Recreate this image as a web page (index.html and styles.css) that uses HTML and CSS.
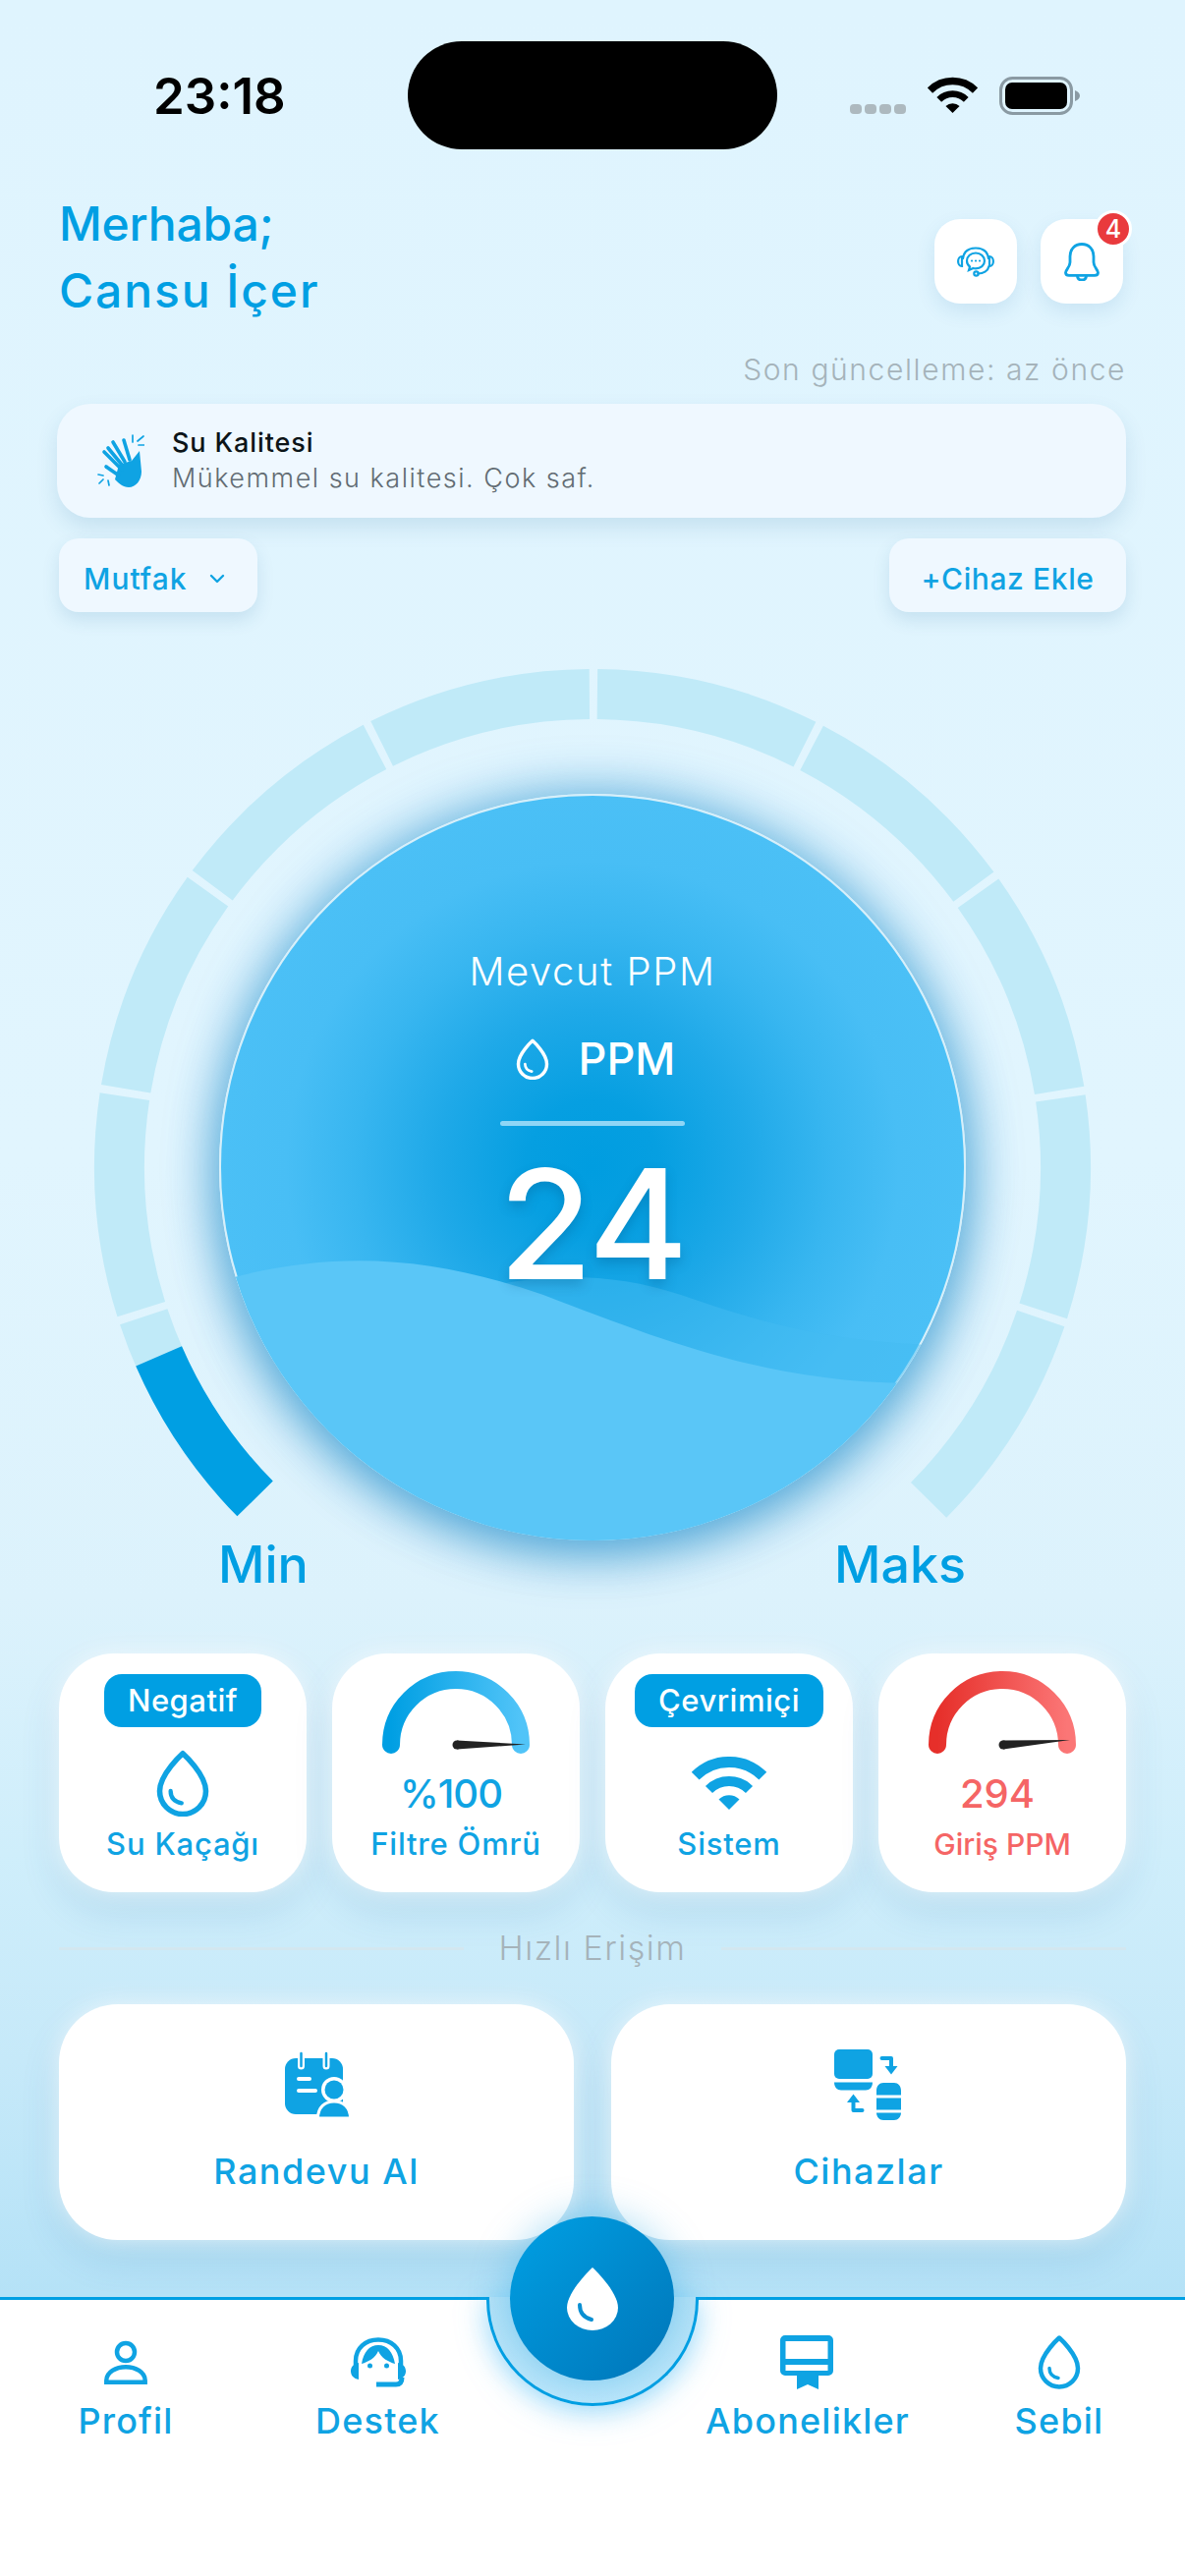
FILE: index.html
```html
<!DOCTYPE html>
<html lang="tr">
<head>
  <meta charset="UTF-8" />
  <title>Su Kalitesi</title>
  <link rel="stylesheet" href="styles.css">
</head>
<body>
  <svg class="defs" width="0" height="0">
    <defs>
      <symbol id="drop" viewBox="0 0 44 55">
        <path d="M22 3C22 3 3 20 3 34a19 19 0 0 0 38 0C41 20 22 3 22 3Z" fill="none" stroke="currentColor" stroke-width="4.5" stroke-linejoin="round"/>
        <path d="M12 34c0 6 4 9 9 10" fill="none" stroke="currentColor" stroke-width="3.5" stroke-linecap="round"/>
      </symbol>
      <linearGradient id="blueArc" x1="0" y1="0" x2="1" y2="0">
        <stop offset="0" stop-color="#009fe3"/>
        <stop offset="1" stop-color="#51c4f8"/>
      </linearGradient>
      <linearGradient id="redArc" x1="0" y1="0" x2="1" y2="0">
        <stop offset="0" stop-color="#e62f2a"/>
        <stop offset="1" stop-color="#fb7676"/>
      </linearGradient>
    </defs>
  </svg>

  <div class="screen">
    <div class="status">
      <span class="time">23:18</span>
      <span class="island"></span>
      <span class="signal"><i></i><i></i><i></i><i></i></span>
      <svg class="status-wifi" viewBox="0 0 76 54">
        <path d="M38 54 27.500 43.500A14.800 14.800 0 0 1 48.500 43.500Z" fill="currentColor"/>
        <path d="M17.500 33.500A29 29 0 0 1 58.500 33.500" fill="none" stroke="currentColor" stroke-width="10"/>
        <path d="M3.700 19.700A48.500 48.500 0 0 1 72.300 19.700" fill="none" stroke="currentColor" stroke-width="11"/>
      </svg>
      <svg class="battery" width="82" height="39" viewBox="0 0 82 39">
        <rect x="1.500" y="1.500" width="72" height="36" rx="12" fill="none" stroke="#8a9aa3" stroke-width="3"/>
        <rect x="6" y="6" width="63" height="27" rx="7" fill="#000"/>
        <path d="M77 14c3 1 5 3 5 5.500S80 24 77 25Z" fill="#8a9aa3"/>
      </svg>
    </div>

    <header class="header">
      <h1 class="greeting"><span class="greet-a">Merhaba;</span><span class="greet-b">Cansu İçer</span></h1>
      <div class="header-actions">
        <button class="icon-btn">
          <svg width="38" height="31" viewBox="0 0 38 31" fill="none" stroke="#0fa3e3" stroke-width="2.200" stroke-linecap="round">
            <path d="M6 12C7 5 12 1.500 19 1.500S31 5 32 12"/>
            <path d="M5 10C2.500 10 1.100 12.500 1.100 15S2.500 20 5 20Z"/>
            <path d="M33 10C35.500 10 36.900 12.500 36.900 15S35.500 20 33 20Z"/>
            <path d="M19 6.500c-5 0-9 3.300-9 8 0 2.500 1 4.500 3 6l-1 3.500 4.500-2c.8.200 1.600.300 2.500.300 5 0 9-3.300 9-7.800s-4-8-9-8Z"/>
            <path d="M32.500 20c-1 5-6 7.500-11 7.500"/>
            <circle cx="19.500" cy="27.500" r="2.200"/>
            <path d="M15 14.500h.1M19 14.500h.1M23 14.500h.1"/>
          </svg>
        </button>
        <button class="icon-btn">
          <svg width="36" height="39" viewBox="0 0 36 39" fill="none" stroke="#0fa3e3" stroke-width="2.800" stroke-linejoin="round">
            <path d="M18 1.500C10.500 1.500 6 7 6 14v6c0 5-4.500 7.500-4.500 10.500 0 2 1.200 2.800 3.500 2.800h26c2.300 0 3.500-.800 3.500-2.800C34.500 27.500 30 25 30 20v-6C30 7 25.500 1.500 18 1.500Z"/>
            <path d="M13.500 33.500c0 3 2 4.500 4.500 4.500s4.500-1.500 4.500-4.500"/>
          </svg>
          <span class="badge">4</span>
        </button>
      </div>
    </header>

    <p class="updated">Son güncelleme: az önce</p>

    <div class="quality">
      <svg class="clap" width="48" height="54" viewBox="0 0 48 54" fill="#0fa3e3" stroke="#0fa3e3" stroke-linecap="round">
        <path d="M22 31 35 27 43 17 45 38C45 47 39 54 32 54 26 54 22 50 18 46Z" stroke="none"/>
        <g fill="none" stroke-width="3.600">
          <path d="M25 36 7 18"/>
          <path d="M25 31 11 14"/>
          <path d="M28 28 16 8"/>
          <path d="M33 26 27 6"/>
          <path d="M22 42 9 33"/>
        </g>
        <g fill="none" stroke-width="1.700">
          <path d="M36 1v7M47 2l-6 5M48 11h-6M1 41l5 1M2 50l4-4M12 52l-1-5"/>
        </g>
      </svg>
      <div class="quality-text">
        <strong>Su Kalitesi</strong>
        <span>Mükemmel su kalitesi. Çok saf.</span>
      </div>
    </div>

    <div class="toolbar">
      <button class="pill-btn mutfak">Mutfak
        <svg width="16" height="10" viewBox="0 0 16 10" fill="none" stroke="#0fa3e3" stroke-width="2.400" stroke-linecap="round" stroke-linejoin="round"><path d="M2 2l6 6 6-6"/></svg>
      </button>
      <button class="pill-btn add">+Cihaz Ekle</button>
    </div>

    <section class="gauge">
      <svg class="ring" width="1014" height="887" viewBox="0 0 1014 887">
        <g transform="rotate(135.500 507 507)" fill="none" stroke-width="51">
          <circle cx="507" cy="507" r="481.500" stroke="#c0eaf8" stroke-dasharray="219 8 219 8 219 8 219 8 219 8 219 8 219 8 219 8 219 8 219 764"/>
          <circle cx="507" cy="507" r="481.500" stroke="#009fe3" stroke-dasharray="176 2900"/>
        </g>
      </svg>
      <div class="dial">
        <svg class="waves" width="760" height="760" viewBox="0 0 760 760">
          <path d="M204 522C290 490 380 480 470 510 570 545 640 560 760 562V760H0V600C60 570 130 545 204 522Z" fill="#43bbf2" fill-opacity=".5"/>
          <path d="M0 496C120 462 220 472 330 510 460 560 560 598 700 600L760 600V760H0Z" fill="#5ac6f7"/>
        </svg>
        <div class="dial-title">Mevcut PPM</div>
        <div class="dial-unit">
          <svg class="dial-drop" width="34" height="42"><use href="#drop"/></svg>
          <span>PPM</span>
        </div>
        <div class="dial-line"></div>
        <div class="dial-value">24</div>
      </div>
    </section>

    <div class="limits"><span>Min</span><span>Maks</span></div>

    <section class="stats">
      <div class="stat">
        <span class="tag">Negatif</span>
        <div class="stat-icon"><svg width="56" height="68"><use href="#drop"/></svg></div>
        <div class="stat-label">Su Kaçağı</div>
      </div>
      <div class="stat stat-gauge">
        <svg width="150" height="90" viewBox="0 0 150 90">
          <path d="M9 75A66 66 0 0 1 141 75" fill="none" stroke="url(#blueArc)" stroke-width="18" stroke-linecap="round"/>
          <circle cx="76" cy="75" r="4.500" fill="#222"/>
          <path d="M76 70.500 146 74.500 76 79.500Z" fill="#222"/>
        </svg>
        <div class="stat-value percent">%100</div>
        <div class="stat-label">Filtre Ömrü</div>
      </div>
      <div class="stat">
        <span class="tag">Çevrimiçi</span>
        <div class="stat-icon">
          <svg width="76" height="54" viewBox="0 0 76 54">
            <path d="M38 54 27.500 43.500A14.800 14.800 0 0 1 48.500 43.500Z" fill="currentColor"/>
            <path d="M17.500 33.500A29 29 0 0 1 58.500 33.500" fill="none" stroke="currentColor" stroke-width="10"/>
            <path d="M3.700 19.700A48.500 48.500 0 0 1 72.300 19.700" fill="none" stroke="currentColor" stroke-width="11"/>
          </svg>
        </div>
        <div class="stat-label">Sistem</div>
      </div>
      <div class="stat stat-gauge stat-red">
        <svg width="150" height="90" viewBox="0 0 150 90">
          <path d="M9 75A66 66 0 0 1 141 75" fill="none" stroke="url(#redArc)" stroke-width="18" stroke-linecap="round"/>
          <circle cx="76" cy="75" r="4.500" fill="#222"/>
          <path d="M75.500 70.500 144 70 76 79.500Z" fill="#222"/>
        </svg>
        <div class="stat-value">294</div>
        <div class="stat-label">Giriş PPM</div>
      </div>
    </section>

    <div class="quick-title"><span>Hızlı Erişim</span></div>

    <section class="quick">
      <div class="quick-card">
        <svg width="72" height="72" viewBox="0 0 72 72">
          <rect x="4" y="9" width="59" height="57" rx="11" fill="#0fa3e3"/>
          <path d="M20.500 4v13M46 4v13" stroke="#fff" stroke-width="7" stroke-linecap="round"/>
          <path d="M20.500 4v13M46 4v13" stroke="#0fa3e3" stroke-width="2.500" stroke-linecap="round"/>
          <path d="M18 30h11M18 42h17" stroke="#fff" stroke-width="4" stroke-linecap="round"/>
          <circle cx="54" cy="41" r="13" fill="#fff"/>
          <circle cx="54" cy="41" r="9.500" fill="#0fa3e3"/>
          <path d="M37.500 70c0-11 7-17 16.500-17s16.500 6 16.500 17Z" fill="#0fa3e3" stroke="#fff" stroke-width="3"/>
        </svg>
        <div class="quick-label">Randevu Al</div>
      </div>
      <div class="quick-card">
        <svg width="72" height="72" viewBox="0 0 72 72" fill="#0fa3e3">
          <rect x="1" y="0" width="39" height="30" rx="5"/>
          <path d="M1 33.500h39c0 5-3 8-7 8H8c-4 0-7-3-7-8Z"/>
          <path d="M44 42c0-5 3-8 7-8h11c4 0 7 3 7 8v4.500H44ZM44 49.500h25v12H44ZM44 64.500h25c0 4-3 7.500-7 7.500H51c-4 0-7-3.500-7-7.500Z"/>
          <path d="M49.500 9h9.500v9" fill="none" stroke="#0fa3e3" stroke-width="4" stroke-linecap="round" stroke-linejoin="round"/>
          <path d="M52.500 17h13L59 25.500Z"/>
          <path d="M29.500 62h-9v-9" fill="none" stroke="#0fa3e3" stroke-width="4" stroke-linecap="round" stroke-linejoin="round"/>
          <path d="M14 54h13l-6.500-8.500Z"/>
        </svg>
        <div class="quick-label">Cihazlar</div>
      </div>
    </section>

    <nav class="nav">
      <div class="notch"></div>
      <div class="fab">
        <svg width="52" height="64" viewBox="0 0 52 64">
          <path d="M26 0C26 0 0 24 0 41a26 23 0 0 0 52 0C52 24 26 0 26 0Z" fill="#fff"/>
          <path d="M13 38c0 8 4 13 12 15" fill="none" stroke="#0a8fd2" stroke-width="4" stroke-linecap="round"/>
        </svg>
      </div>
      <a class="nav-item">
        <svg width="44" height="56" viewBox="0 0 44 56" fill="none" stroke="currentColor" stroke-width="4.500">
          <circle cx="22" cy="18" r="9"/>
          <path d="M2.300 48.700V47C2.300 38.500 12 33.200 22 33.200S41.700 38.500 41.700 47V48.700Z"/>
        </svg>
        <span>Profil</span>
      </a>
      <a class="nav-item">
        <svg width="56" height="56" viewBox="0 0 56 56" fill="none" stroke="currentColor" stroke-width="4.500">
          <path d="M5 32V27C5 14 15 5.500 28 5.500S51 14 51 27V32"/>
          <path d="M11 30C13 18 19 11 28 11S43 18 45 30C38 28 31 24 28 17 25 24 18 28 11 30Z" fill="currentColor" stroke="none"/>
          <path d="M8 29C3 30 0 33 0 37.500S3 45 8 46ZM48 29C53 30 56 33 56 37.500S53 45 48 46Z" fill="currentColor" stroke="none"/>
          <circle cx="19.500" cy="32" r="2.500" fill="currentColor" stroke="none"/>
          <circle cx="36.500" cy="32" r="2.500" fill="currentColor" stroke="none"/>
          <path d="M52 44C52 49 50 51 46 51H26" stroke-width="5"/>
        </svg>
        <span>Destek</span>
      </a>
      <span class="nav-gap"></span>
      <a class="nav-item">
        <svg width="56" height="56" viewBox="0 0 56 56" fill="currentColor">
          <path d="M5 1h44a5 5 0 0 1 5 5v31a5 5 0 0 1-5 5H5a5 5 0 0 1-5-5V6a5 5 0 0 1 5-5Zm.5 6v18h43V7Zm0 24v6h43v-6Z" fill-rule="evenodd"/>
          <path d="M17 42h22v14l-11-5-11 5Z"/>
        </svg>
        <span>Abonelikler</span>
      </a>
      <a class="nav-item">
        <svg width="44" height="56"><use href="#drop"/></svg>
        <span>Sebil</span>
      </a>
    </nav>
  </div>
</body>
</html>
```

FILE: styles.css
```css
* {
  box-sizing: border-box;
}

body {
  margin: 0;
  font-family: Inter, "Noto Sans", sans-serif;
  color: #009fe3;
}

.defs {
  display: block;
  height: 0;
}

.screen {
  width: 1206px;
  height: 2622px;
  overflow: hidden;
  display: flex;
  flex-direction: column;
  background: linear-gradient(180deg, #dff4fe 0, #e1f5fe 45%, #dcf2fc 62%, #cfeefb 72%, #c6e9f9 80%, #b5e2f7 89%);
}

button {
  font-family: inherit;
  border: none;
  cursor: pointer;
}

/* status bar */
.status {
  height: 194px;
  padding: 42px 106px 0 156px;
  display: flex;
  align-items: flex-start;
  color: #000;
}

.time {
  width: 259px;
  height: 110px;
  font-size: 51px;
  font-weight: 600;
  line-height: 112px;
}

.island {
  width: 376px;
  height: 110px;
  border-radius: 55px;
  background: #000;
}

.signal {
  display: flex;
  gap: 3px;
  margin: 64px 0 0 74px;
}

.signal i {
  width: 12px;
  height: 10px;
  border-radius: 4px;
  background: #adb9bf;
}

.status-wifi {
  width: 51px;
  height: 38px;
  margin: 36px 0 0 22px;
}

.battery {
  margin: 36px 0 0 22px;
}

/* header */
.header {
  height: 136px;
  padding: 0 63px 0 60px;
  display: flex;
  justify-content: space-between;
}

.greeting {
  margin: 0;
  display: flex;
  flex-direction: column;
  font-size: 48px;
  font-weight: 500;
  line-height: 68px;
}

.greet-a {
  letter-spacing: -0.2px;
}

.greet-b {
  letter-spacing: 1.9px;
}

.header-actions {
  display: flex;
  gap: 24px;
  padding-top: 29px;
}

.icon-btn {
  position: relative;
  width: 84px;
  height: 86px;
  padding: 0;
  display: flex;
  align-items: center;
  justify-content: center;
  border-radius: 26px;
  background: #fff;
  box-shadow: 0 8px 20px rgba(0, 100, 160, 0.1);
}

.badge {
  position: absolute;
  top: -9px;
  right: -9px;
  width: 38px;
  height: 38px;
  border-radius: 50%;
  border: 3px solid #fff;
  background: #e93a3d;
  color: #fff;
  font-size: 25px;
  font-weight: 500;
  line-height: 32px;
  text-align: center;
}

.updated {
  margin: 26px 60px 15px;
  font-size: 30px;
  font-weight: 300;
  line-height: 40px;
  text-align: right;
  letter-spacing: 1.6px;
  color: #a5b3ba;
}

/* quality card */
.quality {
  height: 116px;
  margin: 0 60px 0 58px;
  padding-left: 41px;
  display: flex;
  align-items: center;
  gap: 28px;
  border-radius: 34px;
  background: #eff8ff;
  box-shadow: 0 10px 22px rgba(0, 90, 140, 0.12);
}

.quality-text {
  display: flex;
  flex-direction: column;
  gap: 4px;
}

.quality-text strong {
  font-size: 27px;
  font-weight: 500;
  line-height: 32px;
  letter-spacing: 0.9px;
  color: #0c1418;
}

.quality-text span {
  font-size: 27px;
  font-weight: 300;
  line-height: 32px;
  letter-spacing: 1.5px;
  color: #626c73;
}

.toolbar {
  margin: 21px 60px 0;
  display: flex;
  justify-content: space-between;
}

.pill-btn {
  height: 75px;
  padding: 6px 0 0;
  display: flex;
  align-items: center;
  border-radius: 20px;
  background: #eff8ff;
  color: #0fa3e3;
  font-size: 30px;
  font-weight: 500;
  letter-spacing: 0.6px;
  box-shadow: 0 8px 18px rgba(0, 90, 140, 0.12);
}

.mutfak {
  width: 202px;
  padding-left: 25px;
  gap: 22px;
  letter-spacing: 1px;
}

.add {
  width: 241px;
  justify-content: center;
}

/* main gauge */
.gauge {
  width: 1014px;
  height: 887px;
  margin: 58px 0 0 96px;
  display: grid;
  justify-items: center;
}

.ring,
.dial {
  grid-area: 1 / 1;
}

.ring {
  overflow: visible;
}

.dial {
  position: relative;
  width: 760px;
  height: 760px;
  margin-top: 127px;
  padding-top: 154px;
  display: flex;
  flex-direction: column;
  align-items: center;
  border: 2px solid #d6effa;
  border-radius: 50%;
  color: #fff;
  background: radial-gradient(circle 380px at 50% 50%, #009de0 0, #069fe1 18%, #1fa9e8 42%, #38b6f0 64%, #48bef5 82%, #4bc0f6 100%);
  box-shadow: 0 0 50px 6px rgba(0, 130, 200, 0.4), 0 16px 50px rgba(0, 120, 190, 0.45);
}

.waves {
  position: absolute;
  top: -2px;
  left: -2px;
  border-radius: 50%;
}

.dial-title,
.dial-unit,
.dial-line,
.dial-value {
  position: relative;
}

.dial-title {
  font-size: 40px;
  font-weight: 300;
  line-height: 50px;
  letter-spacing: 1.6px;
}

.dial-unit {
  margin: 34px 0 0 6px;
  display: flex;
  align-items: center;
  gap: 30px;
  font-size: 45px;
  font-weight: 500;
  line-height: 60px;
}

.dial-line {
  width: 188px;
  height: 5px;
  margin-top: 33px;
  border-radius: 3px;
  background: #8fd6f6;
}

.dial-value {
  margin-top: 25px;
  font-size: 155px;
  font-weight: 500;
  line-height: 150px;
  letter-spacing: -2px;
  text-shadow: 0 6px 12px rgba(0, 70, 120, 0.25);
}

.limits {
  margin-top: -5px;
  padding: 0 223px 0 222px;
  display: flex;
  justify-content: space-between;
  font-size: 52px;
  font-weight: 500;
  line-height: 60px;
}

/* stat cards */
.stats {
  margin: 60px 60px 0;
  display: grid;
  grid-template-columns: repeat(4, 1fr);
  gap: 26px;
}

.stat {
  height: 243px;
  padding: 21px 0 29px;
  display: flex;
  flex-direction: column;
  align-items: center;
  border-radius: 56px;
  background: #fff;
  color: #0fa3e3;
  box-shadow: 0 0 26px rgba(255, 255, 255, 0.75), 0 18px 40px rgba(0, 100, 160, 0.14);
}

.stat-gauge {
  padding-top: 18px;
}

.tag {
  height: 54px;
  padding: 0 24px;
  border-radius: 18px;
  background: #009fe3;
  color: #fff;
  font-size: 31px;
  font-weight: 500;
  line-height: 54px;
  letter-spacing: 0.5px;
}

.stat-icon {
  height: 68px;
  margin-top: 23px;
  display: flex;
  align-items: center;
}

.stat-value {
  margin: 10px 10px 0 0;
  font-size: 40px;
  font-weight: 500;
  line-height: 50px;
}

.percent {
  letter-spacing: -1px;
}

.stat-label {
  margin-top: auto;
  font-size: 31px;
  font-weight: 500;
  line-height: 40px;
  letter-spacing: 0.8px;
}

.stat-red {
  color: #f56565;
}

.stat-red .stat-label {
  font-size: 30px;
  letter-spacing: 0;
}

.quick-title {
  margin: 37px 60px;
  display: flex;
  align-items: center;
  gap: 36px;
  font-size: 34px;
  font-weight: 300;
  line-height: 40px;
  letter-spacing: 1.5px;
  color: #a5b3ba;
}

.quick-title::before,
.quick-title::after {
  content: "";
  flex: 1;
  height: 3px;
  background: #d3e7f0;
}

/* quick access */
.quick {
  margin: 0 60px;
  display: grid;
  grid-template-columns: repeat(2, 1fr);
  gap: 38px;
}

.quick-card {
  height: 240px;
  padding-top: 46px;
  display: flex;
  flex-direction: column;
  align-items: center;
  border-radius: 60px;
  background: #fff;
  color: #0fa3e3;
  box-shadow: 0 0 26px rgba(255, 255, 255, 0.75), 0 18px 40px rgba(0, 100, 160, 0.14);
}

.quick-label {
  margin-top: 27px;
  font-size: 36px;
  font-weight: 500;
  line-height: 50px;
  letter-spacing: 1.5px;
}

/* bottom navigation */
.nav {
  position: relative;
  flex: 1;
  margin-top: 58px;
  padding-top: 35px;
  display: grid;
  grid-template-columns: 256px 257px 181px 256px 256px;
  align-content: start;
  border-top: 3px solid #009fe3;
  background: #fff;
}

.notch {
  position: absolute;
  top: -3px;
  left: 495px;
  width: 216px;
  height: 111px;
  border: 3px solid #009fe3;
  border-top: none;
  border-radius: 0 0 108px 108px;
  background: linear-gradient(180deg, #b5e2f7, #bde7fb);
  box-shadow: 0 6px 30px rgba(79, 190, 245, 0.55);
}

.fab {
  position: absolute;
  top: -85px;
  left: 519px;
  width: 167px;
  height: 167px;
  display: flex;
  align-items: center;
  justify-content: center;
  border-radius: 50%;
  background: linear-gradient(135deg, #00a0e4, #0075b8);
  box-shadow: 0 0 40px rgba(0, 150, 220, 0.35);
}

.nav-item {
  display: flex;
  flex-direction: column;
  align-items: center;
  gap: 12px;
  color: #0fa3e3;
  font-size: 36px;
  font-weight: 500;
  line-height: 40px;
  letter-spacing: 1.2px;
}
```
